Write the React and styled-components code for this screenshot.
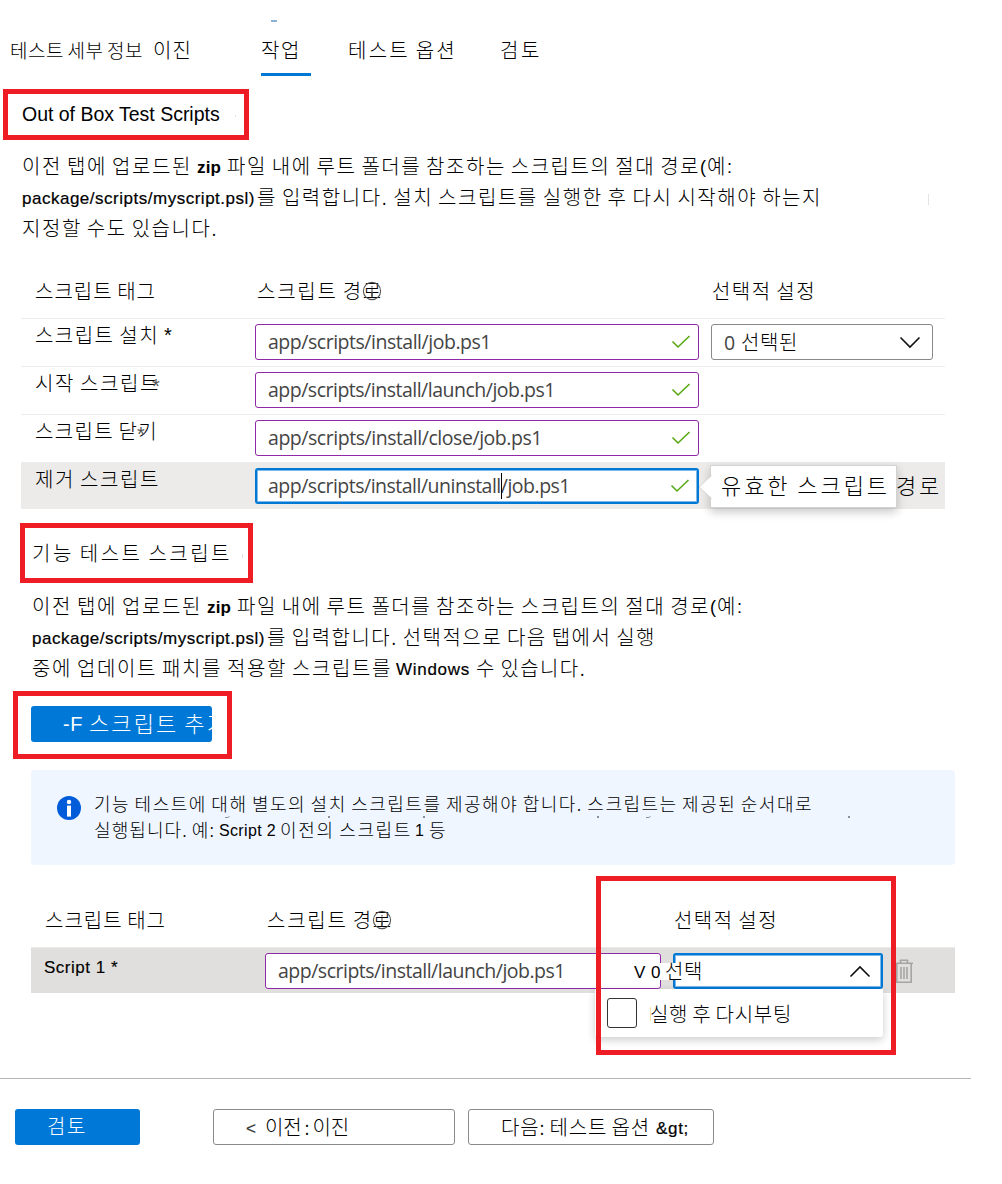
import React from "react";
import styled, { createGlobalStyle } from "styled-components";

const KO = '"Noto Sans CJK KR", "Noto Sans CJK SC", sans-serif';
const LATIN = '"Liberation Sans", Arial, sans-serif';
const UI = '"Open Sans", "Noto Sans", sans-serif';

const GlobalStyle = createGlobalStyle`
  *, *::before, *::after { box-sizing: border-box; }
  body { margin: 0; background: #fff; color: #000; font-family: ${KO}; }
`;

/* Text is tracked so that each run fills its column width. */
const canvas = document.createElement("canvas").getContext("2d");
function tracking(text, font, width, spaces) {
  canvas.font = font;
  return (width - canvas.measureText(text).width + spaces) / text.length;
}

const RunText = styled.span`
  display: block;
  flex: none;
  white-space: pre;
  width: ${(p) => p.$w}px;
  margin-left: ${(p) => p.$ml}px;
  margin-bottom: ${(p) => p.$lift}px;
  font: ${(p) => p.$font};
  line-height: inherit;
  word-spacing: ${(p) => p.$ws}px;
  color: ${(p) => p.$color};
  -webkit-text-stroke: ${(p) => p.$stroke}px currentColor;
`;

function Run({ children, w, ml = 0, lift = 0, size = 20, weight = 300, family = KO, color = "inherit", stroke = 0 }) {
  const text = String(children);
  const font = `${weight} ${size}px ${family}`;
  const squeeze = family === KO ? 1 : 0;
  const spaces = squeeze * (text.split(" ").length - 1);
  return (
    <RunText
      $w={w}
      $ml={ml}
      $lift={lift}
      $font={font}
      $ws={-squeeze}
      $color={color}
      $stroke={stroke}
      style={{ letterSpacing: `${tracking(text, font, w, spaces)}px` }}
    >
      {text}
    </RunText>
  );
}

const EnText = styled.span`
  flex: none;
  transform: translateY(-1px);
`;

const En = ({ ...props }) => (
  <EnText>
    <Run family={LATIN} weight={400} size={17} {...props} />
  </EnText>
);

const Line = styled.div`
  display: flex;
  align-items: baseline;
  height: ${(p) => p.$h || 31}px;
  line-height: ${(p) => p.$h || 31}px;
  padding-left: ${(p) => p.$pl || 0}px;
`;

const Page = styled.main`
  position: relative;
  width: 1002px;
  height: 1184px;
  overflow: hidden;
  background: #fff;
`;

const Tabs = styled.nav`
  display: flex;
  height: 76px;
  padding: 34px 0 0 10px;
  line-height: 31px;
`;

const Tab = styled.div`
  height: 42px;
  margin-right: ${(p) => p.$mr || 0}px;
  width: ${(p) => p.$w}px;
  padding-left: ${(p) => p.$pl || 0}px;
  border-bottom: 3px solid ${(p) => (p.$active ? "#0078d4" : "transparent")};
`;

const Framed = styled.div`
  display: flex;
  align-items: ${(p) => p.$align || "center"};
  width: ${(p) => p.$w}px;
  height: ${(p) => p.$h}px;
  margin: ${(p) => p.$m};
  padding: ${(p) => p.$p || 0};
  border: 5px solid #ee1c25;
`;

const Paragraph = styled.div`
  margin: ${(p) => p.$m};
`;

const Table = styled.section`
  width: 924px;
  margin: ${(p) => p.$m};
`;

const columns = "234px 456px 1fr";
const TableHead = styled.div`
  display: grid;
  grid-template-columns: ${(p) => p.$cols || columns};
  height: ${(p) => p.$h}px;
  line-height: 31px;
`;

const TableRow = styled.div`
  display: grid;
  grid-template-columns: ${(p) => p.$cols || columns};
  align-items: start;
  height: ${(p) => p.$h || 48}px;
  border-top: 1px solid ${(p) => p.$line || "#ececec"};
  background: ${(p) => p.$bg || "transparent"};
`;

const Label = styled.div`
  display: flex;
  align-items: baseline;
  padding-left: 14px;
  height: ${(p) => p.$h || 32}px;
  line-height: ${(p) => p.$h || 32}px;
`;

const HeadCell = styled.div`
  position: relative;
  padding-left: ${(p) => p.$pl}px;
`;

const Star = styled.span`
  position: absolute;
  left: ${(p) => p.$x}px;
  top: 4px;
  font: 20px ${LATIN};
  line-height: 30px;
  color: #555;
`;

const LabelWrap = styled.div`
  position: relative;
`;

const Ring = styled.svg`
  position: absolute;
  left: ${(p) => p.$x}px;
  top: 6px;
`;

const Field = styled.div`
  display: flex;
  align-items: center;
  justify-content: space-between;
  position: relative;
  width: ${(p) => p.$w}px;
  height: 36px;
  margin-top: 5px;
  padding: 0 7px 0 ${(p) => (p.$focus ? 11 : 12)}px;
  border: ${(p) => (p.$focus ? "2px solid #0078d4" : `1px solid ${p.$border || "#8f2aa6"}`)};
  border-radius: 3px;
  box-shadow: ${(p) => (p.$focus ? "inset 0 0 0 1px #7db9ea" : "none")};
  background: #fff;
  color: #444;
  line-height: 32px;
`;

const Caret = styled.i`
  position: absolute;
  left: 244px;
  top: 3px;
  width: 1px;
  height: 26px;
  background: #000;
`;

const Tooltip = styled.div`
  position: absolute;
  left: 710px;
  top: 465px;
  display: flex;
  width: 187px;
  height: 43px;
  padding: 2px 0 0 10px;
  border: 1px solid #d2d2d2;
  background: #fff;
  box-shadow: 0 4px 9px rgba(0, 0, 0, 0.22);
  line-height: 32px;
`;

const TooltipArrow = styled.svg`
  position: absolute;
  left: -13px;
  top: 8px;
`;

const PrimaryButton = styled.button`
  display: flex;
  flex: none;
  align-items: baseline;
  width: ${(p) => p.$w}px;
  height: 36px;
  padding: 0 0 ${(p) => p.$pb || 0}px ${(p) => p.$pl}px;
  overflow: hidden;
  border: 0;
  border-radius: 3px;
  background: #0078d7;
  color: #fff;
  line-height: 33px;
`;

const Button = styled(PrimaryButton)`
  border: 1px solid #8a8a8a;
  background: #fff;
  color: #000;
  margin-left: ${(p) => p.$ml}px;
`;

const Info = styled.section`
  position: relative;
  display: flex;
  width: 924px;
  height: 95px;
  margin: 11px 0 0 31px;
  padding: 20px 0 0 26px;
  border-radius: 4px;
  background: #eff6ff;
`;

const InfoIcon = styled.svg`
  flex: none;
  margin: 6px 13px 0 0;
`;

const Specks = styled.svg`
  position: absolute;
  left: 0;
  top: 0;
  pointer-events: none;
`;

const Menu = styled.div`
  position: absolute;
  left: 595px;
  top: 989px;
  display: flex;
  width: 288px;
  height: 48px;
  padding: 9px 0 0 12px;
  border-radius: 0 0 3px 3px;
  background: #fff;
  box-shadow: 0 3px 8px rgba(0, 0, 0, 0.2);
  line-height: 31px;
`;

const Checkbox = styled.span`
  width: 30px;
  height: 30px;
  margin-right: 13px;
  border: 1px solid #333;
  border-radius: 3px;
`;

const Selected = styled.div`
  position: absolute;
  left: 634px;
  top: 963px;
  display: flex;
  align-items: baseline;
  width: 68px;
  height: 17px;
  background: #fff;
  line-height: 15px;
`;

const Highlight = styled.div`
  position: absolute;
  left: 596px;
  top: 876px;
  width: 300px;
  height: 179px;
  border: 5px solid #ee1c25;
`;

const Footer = styled.footer`
  display: flex;
  width: 971px;
  margin-top: 85px;
  padding: 30px 0 0 15px;
  border-top: 1px solid #b5b5b5;
`;

const Check = () => (
  <svg width="20" height="14" viewBox="0 0 20 14" fill="none">
    <path d="M1.5 6.5 7 12 18.5 1" stroke="#57a914" strokeWidth="1.6" />
  </svg>
);

const Chevron = ({ up }) => (
  <svg width="22" height="13" viewBox="0 0 22 13" fill="none">
    <path d={up ? "M1.5 11.5 11 2 20.5 11.5" : "M1.5 1.5 11 11 20.5 1.5"} stroke="#111" strokeWidth="1.6" />
  </svg>
);

const SelectGap = styled.span`
  display: flex;
  margin-right: ${(p) => p.$mr}px;
`;

const Trash = styled.svg`
  margin: 11px 0 0 11px;
`;

const SelectCell = styled.div`
  display: flex;
`;

const Pair = styled.span`
  display: flex;
  align-items: baseline;
`;

const InfoRing = ({ x }) => (
  <Ring $x={x} width="20" height="20" viewBox="0 0 20 20" fill="none">
    <circle cx="10" cy="10" r="8.6" stroke="#555" strokeWidth="1.1" />
    <path d="M10 5v1.5M10 8v7" stroke="#555" strokeWidth="1.2" />
  </Ring>
);

const scripts = [
  { label: "스크립트 설치", w: 124, required: true, path: "app/scripts/install/job.ps1", pw: 223, options: true },
  { label: "시작 스크립트", w: 125, star: 131, path: "app/scripts/install/launch/job.ps1", pw: 287 },
  { label: "스크립트 닫기", w: 123, star: 116, path: "app/scripts/install/close/job.ps1", pw: 274 },
  { label: "제거 스크립트", w: 125, path: "app/scripts/install/uninstall/job.ps1", pw: 302, focus: true },
];

const Path = ({ w, children }) => (
  <Run family={UI} weight={400} size={19.5} w={w} lift={1}>{children}</Run>
);

export default function App() {
  return (
    <Page>
      <GlobalStyle />
      <Tabs>
        <Tab $w={143}><Run w={133} size={19}>테스트 세부 정보</Run></Tab>
        <Tab $w={108}><Run w={39}>이진</Run></Tab>
        <Tab $w={50} $mr={36} $active><Run w={40}>작업</Run></Tab>
        <Tab $w={152} $pl={1}><Run w={109}>테스트 옵션</Run></Tab>
        <Tab $w={60} $pl={1}><Run w={42}>검토</Run></Tab>
      </Tabs>

      <Framed $w={246} $h={51} $m="13px 0 0 3px" $p="1px 0 0 14px">
        <En size={19.5} w={198}>Out of Box Test Scripts</En>
      </Framed>

      <Paragraph $m="10px 0 0 22px">
        <Line>
          <Run w={170}>이전 탭에 업로드된</Run>
          <En weight={700} w={24} ml={5}>zip</En>
          <Run w={473} ml={6}>파일 내에 루트 폴더를 참조하는 스크립트의 절대 경로</Run>
          <En size={18} w={7}>(</En>
          <Run w={19}>예</Run>
          <En size={18} w={6} ml={1}>:</En>
        </Line>
        <Line>
          <En w={233} stroke={0.2}>package/scripts/myscript.psl)</En>
          <Run w={565} ml={2}>를 입력합니다. 설치 스크립트를 실행한 후 다시 시작해야 하는지</Run>
        </Line>
        <Line><Run w={196}>지정할 수도 있습니다.</Run></Line>
      </Paragraph>

      <Table $m="32px 0 0 21px">
        <TableHead $h={43}>
          <HeadCell $pl={14}><Run w={121}>스크립트 태그</Run></HeadCell>
          <HeadCell $pl={2}><Run w={126}>스크립트 경로</Run><InfoRing x={107} /></HeadCell>
          <HeadCell $pl={1}><Run w={104}>선택적 설정</Run></HeadCell>
        </TableHead>
        {scripts.map((s) => (
          <TableRow key={s.label} $bg={s.focus && "#ecebe9"} $h={s.focus ? 47 : 48}>
            <LabelWrap>
              <Label>
                <Run w={s.w}>{s.label}</Run>
                {s.required && <En w={8} size={20} ml={5}>*</En>}
              </Label>
              {s.star && <Star $x={s.star}>*</Star>}
            </LabelWrap>
            <Field $w={444} $focus={s.focus}>
              <Path w={s.pw}>{s.path}</Path>
              {s.focus && <Caret />}
              <Check />
            </Field>
            {s.options && (
              <Field $w={222} $border="#8a8886">
                <Pair>
                  <Run family={UI} weight={400} size={19.5} w={11}>0</Run>
                  <Run w={57} ml={6} color="#000">선택된</Run>
                </Pair>
                <SelectGap $mr={4}><Chevron /></SelectGap>
              </Field>
            )}
          </TableRow>
        ))}
      </Table>

      <Framed $w={233} $h={60} $m="14px 0 0 20px" $p="0 0 2px 7px">
        <Run w={200}>기능 테스트 스크립트</Run>
      </Framed>

      <Paragraph $m="7px 0 0 32px">
        <Line>
          <Run w={170}>이전 탭에 업로드된</Run>
          <En weight={700} w={24} ml={5}>zip</En>
          <Run w={473} ml={6}>파일 내에 루트 폴더를 참조하는 스크립트의 절대 경로</Run>
          <En size={18} w={7}>(</En>
          <Run w={19}>예</Run>
          <En size={18} w={6} ml={1}>:</En>
        </Line>
        <Line>
          <En w={233} stroke={0.2}>package/scripts/myscript.psl)</En>
          <Run w={389} ml={2}>를 입력합니다. 선택적으로 다음 탭에서 실행</Run>
        </Line>
        <Line>
          <Run w={360}>중에 업데이트 패치를 적용할 스크립트를</Run>
          <En w={74} ml={4} stroke={0.2}>Windows</En>
          <Run w={110} ml={6}>수 있습니다.</Run>
        </Line>
      </Paragraph>

      <Framed $w={219} $h={68} $m="8px 0 0 13px" $p="10px 0 0 13px" $align="flex-start">
        <PrimaryButton $w={181} $pl={32} $pb={3}>
          <En size={20} w={20}>-F</En>
          <Run size={22} w={140} ml={6}>스크립트 추가</Run>
        </PrimaryButton>
      </Framed>

      <Info>
        <InfoIcon width="24" height="24" viewBox="0 0 24 24">
          <circle cx="12" cy="12" r="12" fill="#015cda" />
          <circle cx="12" cy="6" r="2.2" fill="#fff" />
          <rect x="10" y="9.6" width="4" height="11" fill="#fff" />
        </InfoIcon>
        <div>
          <Line $h={26}>
            <Run size={18} w={719}>기능 테스트에 대해 별도의 설치 스크립트를 제공해야 합니다. 스크립트는 제공된 순서대로</Run>
          </Line>
          <Line $h={26}>
            <Run size={18} w={121}>실행됩니다. 예:</Run>
            <En size={16} w={57} ml={4}>Script 2</En>
            <Run size={18} w={132} ml={4}>이전의 스크립트</Run>
            <En size={16} w={9} ml={3}>1</En>
            <Run size={18} w={18} ml={5}>등</Run>
          </Line>
        </div>
        <Specks width="924" height="95" fill="#8b8f97">
          <path d="M194 48h3l2-2h-1l-1 1h-3zM615 48h3l2-2h-1l-1 1h-3z" />
          <path d="M297 46h2v2h-2zM392 46h2v2h-2zM566 46h2v2h-2zM817 46h2v2h-2z" />
        </Specks>
      </Info>

      <Table $m="39px 0 0 31px">
        <TableHead $h={43} $cols="234px 408px 1fr">
          <HeadCell $pl={14}><Run w={121}>스크립트 태그</Run></HeadCell>
          <HeadCell $pl={2}><Run w={126}>스크립트 경로</Run><InfoRing x={107} /></HeadCell>
          <HeadCell $pl={1}><Run w={104}>선택적 설정</Run></HeadCell>
        </TableHead>
        <TableRow $cols="234px 408px 1fr" $bg="#e0dfdd" $line="#eceae8" $h={46}>
          <Label $h={41}><En w={74} ml={-1} stroke={0.15}>Script 1 *</En></Label>
          <Field $w={396}><Path w={287}>app/scripts/install/launch/job.ps1</Path></Field>
          <SelectCell>
            <Field $w={210} $focus><span /><SelectGap $mr={3}><Chevron up /></SelectGap></Field>
            <Trash width="20" height="25" viewBox="0 0 20 25" fill="none" stroke="#a6a5a3" strokeWidth="1.6">
              <path d="M1 4.2h18M6.5 4V1.2h7V4M2.8 4.5v18.7h14.4V4.5M7 8v12M10 8v12M13 8v12" />
            </Trash>
          </SelectCell>
        </TableRow>
      </Table>

      <Footer>
        <PrimaryButton $w={125} $pl={32}><Run w={40}>검토</Run></PrimaryButton>
        <Button $w={242} $ml={73} $pl={32}>
          <En w={11} color="#333" stroke={0.2}>&lt;</En>
          <Run w={84} ml={8}>이전 : 이진</Run>
        </Button>
        <Button $w={246} $ml={13} $pl={32}>
          <Run w={149}>다음: 테스트 옵션</Run>
          <En w={33} ml={6} stroke={0.2}>{"&gt;"}</En>
        </Button>
      </Footer>

      <Tooltip>
        <TooltipArrow width="14" height="26" viewBox="0 0 14 26">
          <path d="M14 1 1 13 14 25" fill="#fff" stroke="#d2d2d2" />
          <path d="M13 1.5h1v23h-1z" fill="#fff" />
        </TooltipArrow>
        <Run size={22} w={169}>유효한 스크립트</Run>
        <Run size={22} w={46} ml={6}>경로</Run>
      </Tooltip>
      <Menu>
        <Checkbox />
        <Run w={142}>실행 후 다시부팅</Run>
      </Menu>
      <Highlight />
      <Selected>
        <En w={27}>V 0</En>
        <Run w={38} ml={4}>선택</Run>
      </Selected>
      <Specks width="1002" height="1050">
        <path d="M271 21h6" stroke="#5b8fc0" strokeWidth="1.4" />
        <path d="M928.5 194v11M235.5 115v2M242.5 554v4" stroke="#e3e3e3" />
        <path d="M650.5 1007v14" stroke="#fbe3a6" />
      </Specks>
    </Page>
  );
}
